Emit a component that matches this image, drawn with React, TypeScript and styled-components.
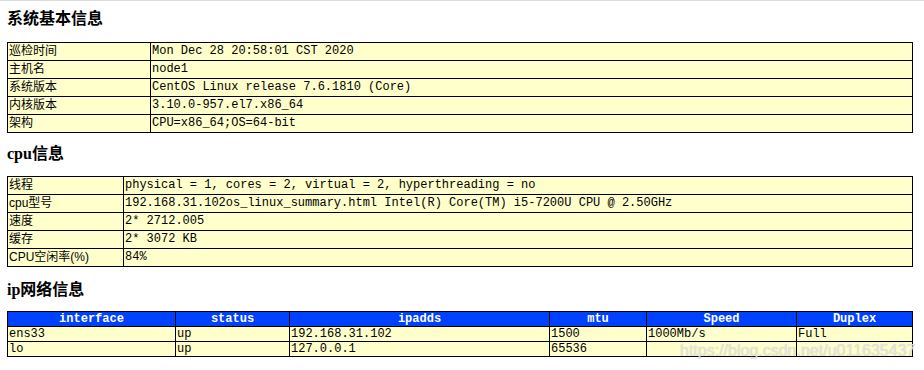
import React from 'react';
import styled, { createGlobalStyle } from 'styled-components';

const GlobalStyle = createGlobalStyle`
  html, body {
    margin: 0;
    padding: 0;
    background: #fff;
  }
`;

const baseRows: [string, string][] = [
  ['巡检时间', 'Mon Dec 28 20:58:01 CST 2020'],
  ['主机名', 'node1'],
  ['系统版本', 'CentOS Linux release 7.6.1810 (Core)'],
  ['内核版本', '3.10.0-957.el7.x86_64'],
  ['架构', 'CPU=x86_64;OS=64-bit'],
];

const cpuRows: [string, string][] = [
  ['线程', 'physical = 1, cores = 2, virtual = 2, hyperthreading = no'],
  ['cpu型号', '192.168.31.102os_linux_summary.html Intel(R) Core(TM) i5-7200U CPU @ 2.50GHz'],
  ['速度', '2* 2712.005'],
  ['缓存', '2* 3072 KB'],
  ['CPU空闲率(%)', '84%'],
];

const netHead = ['interface', 'status', 'ipadds', 'mtu', 'Speed', 'Duplex'];
const netWidths = [168, 114, 260, 97, 150, 116];
const netRows = [
  ['ens33', 'up', '192.168.31.102', '1500', '1000Mb/s', 'Full'],
  ['lo', 'up', '127.0.0.1', '65536', '', ''],
];

const Page = styled.div`
  position: relative;
  border-top: 1px solid #dcdcdc;
  padding: 0 11px 0 7px;
  height: 369px;
  overflow: hidden;
`;

const Title = styled.h3<{ $top: number; $bottom: number }>`
  margin: ${p => p.$top}px 0 ${p => p.$bottom}px;
  font-family: "Liberation Serif", "Noto Sans CJK SC", serif;
  font-size: 16px;
  line-height: 20px;
  font-weight: bold;
  color: #000;
`;

const Table = styled.table`
  width: 906px;
  border-collapse: collapse;
  table-layout: fixed;
  background: #ffffcc;
`;

const Label = styled.td`
  border: 1px solid #000;
  padding: 0 1px;
  height: 17px;
  line-height: 17px;
  font-family: "Liberation Sans", "Noto Sans CJK SC", sans-serif;
  font-size: 12px;
  color: #000;
  white-space: nowrap;
  overflow: hidden;
`;

const Value = styled.td<{ $h?: number }>`
  border: 1px solid #000;
  padding: 0 1px;
  height: ${p => p.$h ?? 17}px;
  line-height: ${p => p.$h ?? 17}px;
  font-family: "Liberation Mono", "Noto Sans CJK SC", monospace;
  font-size: 12px;
  color: #000;
  white-space: nowrap;
  overflow: hidden;
`;

const Head = styled.th`
  border: 1px solid #000;
  padding: 0;
  height: 14px;
  line-height: 14px;
  background: #0040ff;
  color: #fff;
  font-family: "Liberation Mono", monospace;
  font-size: 12px;
  font-weight: bold;
  text-align: center;
`;

const Watermark = styled.div`
  position: absolute;
  left: 680px;
  top: 341px;
  font-family: "Liberation Sans", Arial, sans-serif;
  font-size: 16px;
  color: rgba(235, 235, 235, 0.85);
  text-shadow: 0 0 1px rgba(150, 150, 150, 0.6);
  pointer-events: none;
  white-space: nowrap;
`;

const KeyTable = ({ rows, labelWidth }: { rows: [string, string][]; labelWidth: number }) => (
  <Table>
    <colgroup>
      <col style={{ width: labelWidth }} />
      <col />
    </colgroup>
    <tbody>
      {rows.map(([k, v]) => (
        <tr key={k}>
          <Label>{k}</Label>
          <Value>{v}</Value>
        </tr>
      ))}
    </tbody>
  </Table>
);

const App = () => {
  return (
    <>
      <GlobalStyle />
      <Page>
        <Title $top={8} $bottom={13}>系统基本信息</Title>
        <KeyTable rows={baseRows} labelWidth={143} />

        <Title $top={11} $bottom={12}>cpu信息</Title>
        <KeyTable rows={cpuRows} labelWidth={116} />

        <Title $top={13} $bottom={11}>ip网络信息</Title>
        <Table>
          <colgroup>
            {netWidths.map((w, i) => (
              <col key={i} style={{ width: w }} />
            ))}
          </colgroup>
          <thead>
            <tr>
              {netHead.map(h => (
                <Head key={h}>{h}</Head>
              ))}
            </tr>
          </thead>
          <tbody>
            {netRows.map(r => (
              <tr key={r[0]}>
                {r.map((c, i) => (
                  <Value key={i} $h={14}>{c}</Value>
                ))}
              </tr>
            ))}
          </tbody>
        </Table>
        <Watermark>https://blog.csdn.net/u011635437</Watermark>
      </Page>
    </>
  );
};

export default App;
